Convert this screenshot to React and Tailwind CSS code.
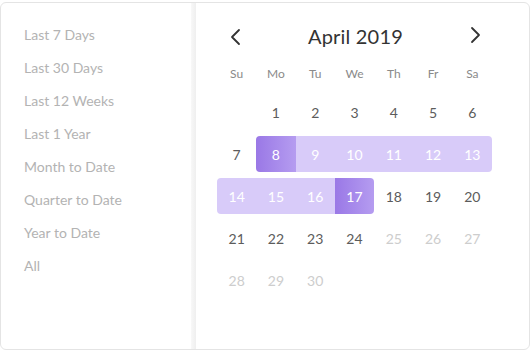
import React from 'react';

const presets = [
  'Last 7 Days',
  'Last 30 Days',
  'Last 12 Weeks',
  'Last 1 Year',
  'Month to Date',
  'Quarter to Date',
  'Year to Date',
  'All',
];

const weekdays = ['Su', 'Mo', 'Tu', 'We', 'Th', 'Fr', 'Sa'];

// April 2019 starts on a Monday
const weeks = [
  [null, 1, 2, 3, 4, 5, 6],
  [7, 8, 9, 10, 11, 12, 13],
  [14, 15, 16, 17, 18, 19, 20],
  [21, 22, 23, 24, 25, 26, 27],
  [28, 29, 30, null, null, null, null],
];

const start = 8;
const end = 17;
const today = 24;

function DayCell({ day, col }) {
  if (!day) return <div className="h-[42px]" />;
  const inRange = day >= start && day <= end;
  const isEdge = day === start || day === end;
  const disabled = day > today;

  let band = '';
  if (inRange) {
    band = isEdge
      ? 'bg-gradient-to-r from-[#9a78e6] to-[#b59cf0] text-white'
      : 'bg-[#d8cbf9] text-white';
    const roundL = day === start || col === 0;
    const roundR = day === end || col === 6;
    if (roundL) band += ' rounded-l-[4px]';
    if (roundR) band += ' rounded-r-[4px]';
  }

  return (
    <div className="h-[42px] py-[3px]">
      <div
        className={`h-full flex items-center justify-center text-[14px] ${
          inRange ? band : disabled ? 'text-[#cdcdcd]' : 'text-[#5c5c5c]'
        }`}
      >
        {day}
      </div>
    </div>
  );
}

export default function App() {
  return (
    <div className="w-[530px] h-[352px] bg-white pt-[2px] font-['Lato',sans-serif]">
      <div className="h-[348px] border border-[#e4e4e4] rounded-[6px] flex overflow-hidden">
        <div className="w-[190px] pt-[20px] pl-[23px] flex flex-col">
          {presets.map((p) => (
            <div key={p} className="h-[33px] text-[14px] text-[#b3b3b3] leading-[24px]">
              {p}
            </div>
          ))}
        </div>
        <div className="w-[5px] bg-gradient-to-r from-[#f8f8f8] to-[#efefef]" />
        <div className="flex-1 pl-[21px] pr-[37px]">
          <div className="h-[58px] flex items-center justify-between pt-[8px]">
            <svg width="20" height="20" viewBox="0 0 20 20" className="ml-[9px] mt-[2px]">
              <polyline points="13,3 6,10 13,17" fill="none" stroke="#333" strokeWidth="1.8" strokeLinecap="round" strokeLinejoin="round" />
            </svg>
            <div className="text-[20px] text-[#333] tracking-[0.2px]">April 2019</div>
            <svg width="20" height="20" viewBox="0 0 20 20" className="mr-[7px] -mt-[2px]">
              <polyline points="7,3 14,10 7,17" fill="none" stroke="#333" strokeWidth="1.8" strokeLinecap="round" strokeLinejoin="round" />
            </svg>
          </div>
          <div className="grid grid-cols-7 h-[30px] items-center pb-[4px]">
            {weekdays.map((w) => (
              <div key={w} className="text-center text-[12px] text-[#8a8a8a]">
                {w}
              </div>
            ))}
          </div>
          <div className="grid grid-cols-7">
            {weeks.map((week, r) =>
              week.map((d, c) => <DayCell key={`${r}-${c}`} day={d} col={c} />)
            )}
          </div>
        </div>
      </div>
    </div>
  );
}
